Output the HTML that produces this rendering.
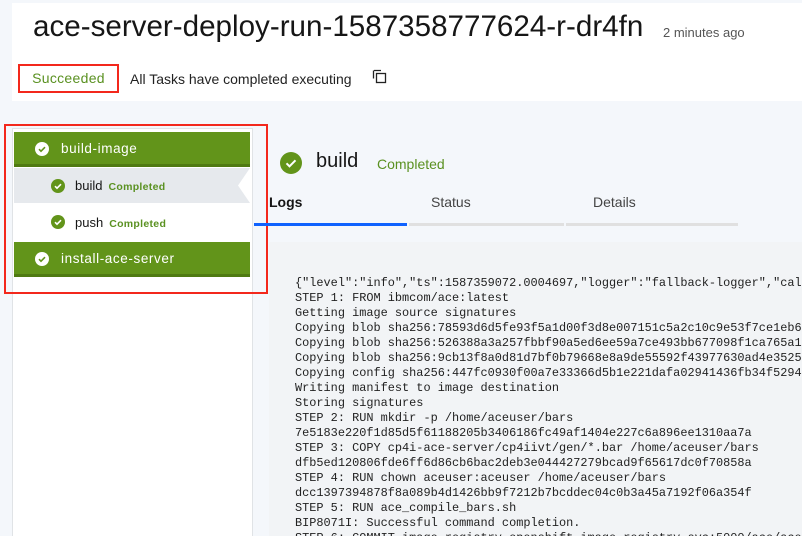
<!DOCTYPE html>
<html><head><meta charset="utf-8"><style>
*{margin:0;padding:0;box-sizing:border-box}
html,body{width:802px;height:536px;overflow:hidden}
body{background:#f4f7fb;font-family:"Liberation Sans",sans-serif;position:relative;color:#161616}
.abs{position:absolute}
.hdr{left:12px;top:3px;width:790px;height:98px;background:#fff}
.title{left:33px;top:10px;font-size:29.6px;white-space:nowrap;color:#161616}
.ago{left:663px;top:25px;font-size:13px;color:#555}
.succ{left:18px;top:64px;width:101px;height:29px;border:2px solid #f3281c;color:#5a9121;font-size:14px;line-height:25px;text-align:center;letter-spacing:0.3px}
.msg{left:130px;top:71px;font-size:14px;color:#222}
.left{left:12px;top:128px;width:241px;height:408px;background:#fff;border:1px solid #e0e3e6;border-bottom:none}
.bar{left:14px;width:236px;height:35px;background:#62941a;border-bottom:3px solid #4f7a12;color:#fff;font-size:13.5px;letter-spacing:0.6px;line-height:33px;padding-left:47px}
.row{left:14px;width:236px;height:35px;font-size:13px;line-height:35px;padding-left:61px}
.row b{color:#5a9121;font-size:10.5px;margin-left:6px;letter-spacing:0.3px}
.red{left:4px;top:124px;width:264px;height:170px;border:2px solid #f3281c}
.logs{left:269px;top:242px;width:533px;height:294px;background:#f2f4f6;overflow:hidden}
pre{position:absolute;left:26px;top:34px;font-family:"Liberation Mono",monospace;font-size:11.9px;line-height:15px;color:#222}
</style></head><body>
<div class="abs hdr"></div>
<div class="abs title">ace-server-deploy-run-1587358777624-r-dr4fn</div>
<div class="abs ago">2 minutes ago</div>
<div class="abs succ">Succeeded</div>
<div class="abs msg">All Tasks have completed executing</div>
<svg class="abs" style="left:372px;top:69px" width="16" height="16" viewBox="0 0 16 16"><path d="M2 1.5h7M1.5 1.5v8" stroke="#222" stroke-width="1.3" fill="none"/><rect x="4.5" y="4.5" width="9" height="9" fill="none" stroke="#222" stroke-width="1.3"/></svg>

<div class="abs left"></div>
<div class="abs bar" style="top:132px">build-image</div>
<div class="abs row" style="top:168px;background:#e6e9ed">build<b>Completed</b></div>
<svg class="abs" style="left:238px;top:168px" width="12" height="35"><polygon points="12,0 0,17.5 12,35" fill="#fff"/></svg>
<div class="abs row" style="top:205px">push<b>Completed</b></div>
<div class="abs bar" style="top:242px">install-ace-server</div>
<svg class="abs" style="left:35px;top:142px" width="14" height="14"><circle cx="7" cy="7" r="7" fill="#fff"/><path d="M4 7.2l2 2 4-4" stroke="#62941a" stroke-width="1.6" fill="none"/></svg>
<svg class="abs" style="left:35px;top:252px" width="14" height="14"><circle cx="7" cy="7" r="7" fill="#fff"/><path d="M4 7.2l2 2 4-4" stroke="#62941a" stroke-width="1.6" fill="none"/></svg>
<svg class="abs" style="left:51px;top:179px" width="14" height="14"><circle cx="7" cy="7" r="7" fill="#62941a"/><path d="M4 7.2l2 2 4-4" stroke="#fff" stroke-width="1.6" fill="none"/></svg>
<svg class="abs" style="left:51px;top:215px" width="14" height="14"><circle cx="7" cy="7" r="7" fill="#62941a"/><path d="M4 7.2l2 2 4-4" stroke="#fff" stroke-width="1.6" fill="none"/></svg>
<div class="abs red"></div>

<svg class="abs" style="left:280px;top:152px" width="22" height="22"><circle cx="11" cy="11" r="11" fill="#62941a"/><path d="M6.5 11.3l3 3 6-6" stroke="#fff" stroke-width="2" fill="none"/></svg>
<div class="abs" style="left:316px;top:150px;font-size:20px">build</div>
<div class="abs" style="left:377px;top:156px;font-size:14px;color:#5a9121">Completed</div>
<div class="abs" style="left:269px;top:194px;font-size:14px;font-weight:bold">Logs</div>
<div class="abs" style="left:431px;top:194px;font-size:14px;color:#444">Status</div>
<div class="abs" style="left:593px;top:194px;font-size:14px;color:#444">Details</div>
<div class="abs" style="left:254px;top:223px;width:153px;height:3px;background:#0f62fe"></div>
<div class="abs" style="left:409px;top:223px;width:155px;height:3px;background:#e0e0e0"></div>
<div class="abs" style="left:566px;top:223px;width:172px;height:3px;background:#e0e0e0"></div>

<div class="abs logs"><pre>{"level":"info","ts":1587359072.0004697,"logger":"fallback-logger","caller":"logging/config.go"}
STEP 1: FROM ibmcom/ace:latest
Getting image source signatures
Copying blob sha256:78593d6d5fe93f5a1d00f3d8e007151c5a2c10c9e53f7ce1eb6
Copying blob sha256:526388a3a257fbbf90a5ed6ee59a7ce493bb677098f1ca765a1
Copying blob sha256:9cb13f8a0d81d7bf0b79668e8a9de55592f43977630ad4e3525
Copying config sha256:447fc0930f00a7e33366d5b1e221dafa02941436fb34f5294
Writing manifest to image destination
Storing signatures
STEP 2: RUN mkdir -p /home/aceuser/bars
7e5183e220f1d85d5f61188205b3406186fc49af1404e227c6a896ee1310aa7a
STEP 3: COPY cp4i-ace-server/cp4iivt/gen/*.bar /home/aceuser/bars
dfb5ed120806fde6ff6d86cb6bac2deb3e044427279bcad9f65617dc0f70858a
STEP 4: RUN chown aceuser:aceuser /home/aceuser/bars
dcc1397394878f8a089b4d1426bb9f7212b7bcddec04c0b3a45a7192f06a354f
STEP 5: RUN ace_compile_bars.sh
BIP8071I: Successful command completion.
STEP 6: COMMIT image-registry.openshift-image-registry.svc:5000/ace/ace</pre></div>
</body></html>
